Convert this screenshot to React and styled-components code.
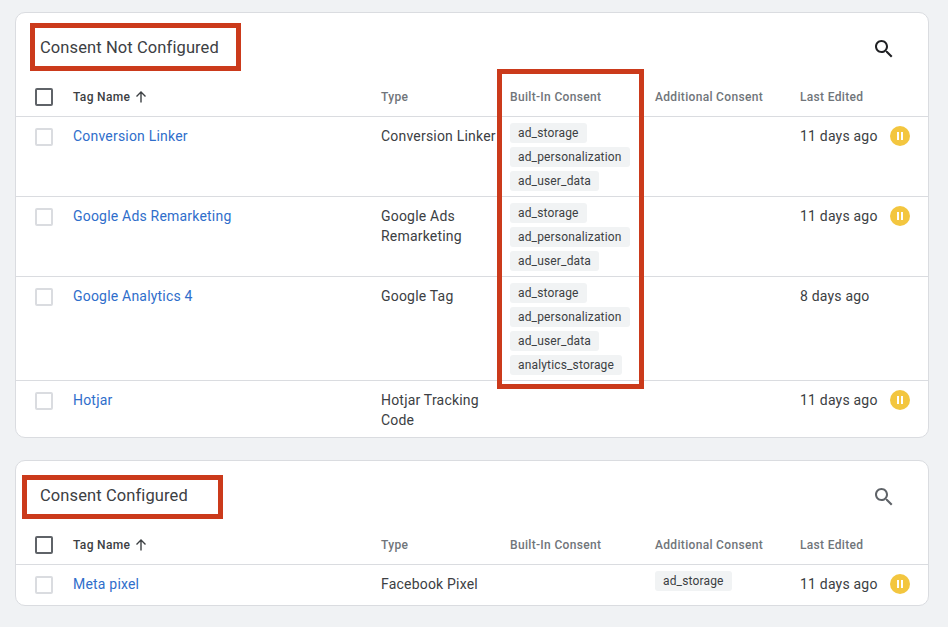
import React from "react";
import styled, { createGlobalStyle } from "styled-components";

const GlobalStyle = createGlobalStyle`
  html, body {
    margin: 0;
    padding: 0;
    background: #f0f2f4;
  }
  body {
    font-family: Roboto, "Liberation Sans", sans-serif;
    color: #3c4043;
  }
`;

const Page = styled.div`
  display: flex;
  flex-direction: column;
  gap: 22px;
  width: 914px;
  height: 627px;
  box-sizing: border-box;
  padding-top: 12px;
  margin-left: 15px;
  overflow: hidden;
`;

const Card = styled.section`
  position: relative;
  background: #fff;
  border: 1px solid #dadce0;
  border-radius: 10px;
`;

const TitleBar = styled.div`
  display: flex;
  justify-content: space-between;
  height: 66px;
  box-sizing: border-box;
  padding: 23px 32px 0 24px;
`;

const Title = styled.h2`
  margin: 0;
  font-size: 16.5px;
  line-height: 24px;
  font-weight: 400;
  letter-spacing: 0.1px;
  color: #3c4043;
`;

const SearchButton = styled.svg`
  width: 24px;
  height: 24px;
  margin-top: 1px;
  fill: ${(p) => (p.$muted ? "#5f6368" : "#202124")};
`;

const Grid = styled.div`
  display: grid;
  grid-template-columns: 57px 308px 129px 145px 145px 1fr;
  border-bottom: ${(p) => (p.$last ? "none" : "1px solid #dadce0")};
  min-height: ${(p) => p.$height}px;
  box-sizing: border-box;
`;

const HeadRow = styled(Grid)`
  height: 38px;
  align-items: center;
  padding-bottom: 2px;
  border-bottom: 1px solid #dadce0;
`;

const HeadCell = styled.div`
  display: flex;
  align-items: center;
  gap: 4px;
  font-size: 12px;
  line-height: 16px;
  font-weight: 500;
  letter-spacing: 0.32px;
  color: ${(p) => (p.$strong ? "#3c4043" : "#70757a")};
`;

const CheckCell = styled.div`
  padding-left: 19px;
  padding-top: ${(p) => (p.$head ? 0 : 11)}px;
`;

const Checkbox = styled.div`
  width: 18px;
  height: 18px;
  box-sizing: border-box;
  border: 2px solid ${(p) => (p.$dark ? "#5f6368" : "#dadce0")};
  border-radius: 2px;
`;

const Cell = styled.div`
  padding-top: 9px;
  font-size: 14px;
  line-height: 20px;
  letter-spacing: 0.2px;
  color: #3c4043;
`;

const TagLink = styled.a`
  color: #2f6ecb;
  text-decoration: none;
  cursor: pointer;
`;

const TypeText = styled.div`
  white-space: pre-line;
  width: 125px;
`;

const ChipCell = styled.div`
  display: flex;
  flex-direction: column;
  align-items: flex-start;
  gap: 4px;
  padding-top: 6px;
  padding-bottom: 5px;
`;

const Chip = styled.span`
  height: 20px;
  padding: 0 8px;
  background: #f1f3f4;
  border-radius: 3px;
  font-size: 12px;
  line-height: 20px;
  letter-spacing: 0.16px;
  color: #3c4043;
`;

const EditedCell = styled(Cell)`
  display: flex;
  align-items: flex-start;
  gap: 12px;
`;

const EditedText = styled.span`
  width: 78px;
  white-space: nowrap;
`;

const PauseBadge = styled.span`
  display: flex;
  align-items: center;
  justify-content: center;
  gap: 2px;
  width: 20px;
  height: 20px;
  border-radius: 50%;
  background: #f3c63f;

  &::before,
  &::after {
    content: "";
    width: 2px;
    height: 8px;
    background: #fff;
  }
`;

// red annotation boxes drawn over the screenshot
const Highlight = styled.div`
  position: absolute;
  left: ${(p) => p.$left}px;
  top: ${(p) => p.$top}px;
  width: ${(p) => p.$width}px;
  height: ${(p) => p.$height}px;
  box-sizing: border-box;
  border: 5px solid #cb3a1b;
  pointer-events: none;
`;

const SearchIcon = ({ muted }) => (
  <SearchButton $muted={muted} viewBox="0 0 24 24">
    <path d="M15.5 14h-.79l-.28-.27C15.41 12.59 16 11.11 16 9.5 16 5.91 13.09 3 9.5 3S3 5.91 3 9.5 5.91 16 9.5 16c1.61 0 3.09-.59 4.23-1.57l.27.28v.79l5 4.99L20.49 19l-4.99-5zm-6 0C7.01 14 5 11.99 5 9.5S7.01 5 9.5 5 14 7.01 14 9.5 11.99 14 9.5 14z" />
  </SearchButton>
);

const ArrowUp = () => (
  <svg width="14" height="14" viewBox="0 0 14 14" fill="none" stroke="#3c4043" strokeWidth="1.4">
    <path d="M7 12.5V2M2.5 6.5L7 2l4.5 4.5" />
  </svg>
);

const Head = () => (
  <HeadRow $last>
    <CheckCell $head>
      <Checkbox $dark />
    </CheckCell>
    <HeadCell $strong>
      Tag Name <ArrowUp />
    </HeadCell>
    <HeadCell>Type</HeadCell>
    <HeadCell>Built-In Consent</HeadCell>
    <HeadCell>Additional Consent</HeadCell>
    <HeadCell>Last Edited</HeadCell>
  </HeadRow>
);

const Row = ({ name, type, builtIn = [], additional = [], edited, paused, height, last }) => (
  <Grid $height={height} $last={last}>
    <CheckCell>
      <Checkbox />
    </CheckCell>
    <Cell>
      <TagLink>{name}</TagLink>
    </Cell>
    <Cell>
      <TypeText>{type}</TypeText>
    </Cell>
    <ChipCell>
      {builtIn.map((c) => (
        <Chip key={c}>{c}</Chip>
      ))}
    </ChipCell>
    <ChipCell>
      {additional.map((c) => (
        <Chip key={c}>{c}</Chip>
      ))}
    </ChipCell>
    <EditedCell>
      <EditedText>{edited}</EditedText>
      {paused && <PauseBadge />}
    </EditedCell>
  </Grid>
);

const adChips = ["ad_storage", "ad_personalization", "ad_user_data"];

export default function App() {
  return (
    <>
      <GlobalStyle />
      <Page>
        <Card>
          <TitleBar>
            <Title>Consent Not Configured</Title>
            <SearchIcon />
          </TitleBar>
          <Head />
          <Row name="Conversion Linker" type="Conversion Linker" builtIn={adChips} edited="11 days ago" paused height={80} />
          <Row name="Google Ads Remarketing" type={"Google Ads\nRemarketing"} builtIn={adChips} edited="11 days ago" paused height={80} />
          <Row name="Google Analytics 4" type="Google Tag" builtIn={[...adChips, "analytics_storage"]} edited="8 days ago" height={104} />
          <Row name="Hotjar" type={"Hotjar Tracking\nCode"} edited="11 days ago" paused height={56} last />
          <Highlight $left={14} $top={10} $width={211} $height={48} />
          <Highlight $left={481} $top={56} $width={147} $height={320} />
        </Card>
        <Card>
          <TitleBar>
            <Title>Consent Configured</Title>
            <SearchIcon muted />
          </TitleBar>
          <Head />
          <Row name="Meta pixel" type="Facebook Pixel" additional={["ad_storage"]} edited="11 days ago" paused height={40} last />
          <Highlight $left={6} $top={14} $width={201} $height={44} />
        </Card>
      </Page>
    </>
  );
}
